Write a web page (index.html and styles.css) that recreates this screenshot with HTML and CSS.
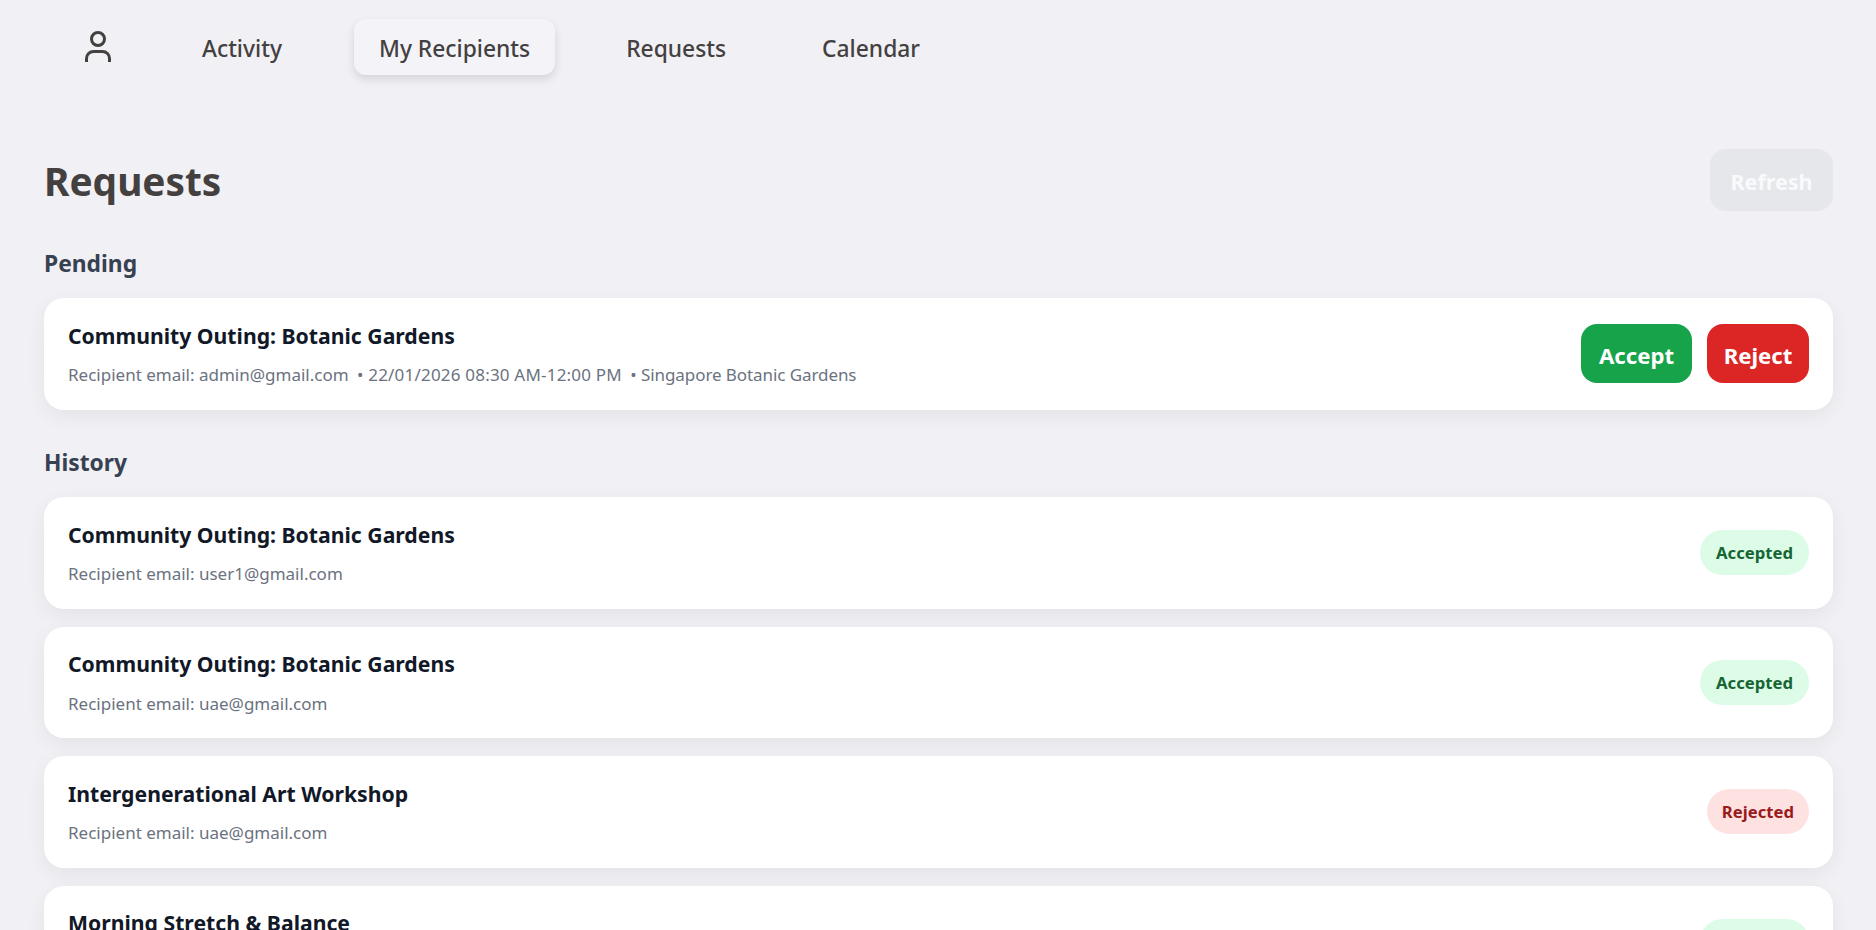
FILE: index.html
```html
<!DOCTYPE html>
<html lang="en">
<head>
<meta charset="utf-8">
<title>Requests</title>
<link rel="stylesheet" href="styles.css">
</head>
<body>
<nav class="nav">
  <a class="nav-icon" aria-label="Profile">
    <svg width="36" height="36" viewBox="0 0 36 36" fill="none" stroke="#44403f" stroke-width="3">
      <circle cx="18" cy="10" r="6.5"/>
      <path d="M6.5 33v-3.5a7 7 0 0 1 7-7h9a7 7 0 0 1 7 7V33"/>
    </svg>
  </a>
  <a class="nav-item">Activity</a>
  <a class="nav-item active">My Recipients</a>
  <a class="nav-item">Requests</a>
  <a class="nav-item">Calendar</a>
</nav>
<main class="main">
  <header class="head">
    <h1 class="title">Requests</h1>
    <button class="refresh">Refresh</button>
  </header>
  <h2 class="section">Pending</h2>
  <div class="list">
    <article class="card">
      <div class="info">
        <h3 class="name">Community Outing: Botanic Gardens</h3>
        <p class="meta">Recipient email: admin@gmail.com <span class="date">• 22/01/2026 08:30 AM-12:00 PM</span> <span class="place">• Singapore Botanic Gardens</span></p>
      </div>
      <div class="actions">
        <button class="btn accept">Accept</button>
        <button class="btn reject">Reject</button>
      </div>
    </article>
  </div>
  <h2 class="section history">History</h2>
  <div class="list">
    <article class="card">
      <div class="info">
        <h3 class="name">Community Outing: Botanic Gardens</h3>
        <p class="meta">Recipient email: user1@gmail.com</p>
      </div>
      <span class="badge ok">Accepted</span>
    </article>
    <article class="card">
      <div class="info">
        <h3 class="name">Community Outing: Botanic Gardens</h3>
        <p class="meta">Recipient email: uae@gmail.com</p>
      </div>
      <span class="badge ok">Accepted</span>
    </article>
    <article class="card">
      <div class="info">
        <h3 class="name">Intergenerational Art Workshop</h3>
        <p class="meta">Recipient email: uae@gmail.com</p>
      </div>
      <span class="badge no">Rejected</span>
    </article>
    <article class="card">
      <div class="info">
        <h3 class="name">Morning Stretch &amp; Balance</h3>
        <p class="meta">Recipient email: uae@gmail.com</p>
      </div>
      <span class="badge ok">Accepted</span>
    </article>
  </div>
</main>
</body>
</html>
```
FILE: styles.css
```css
* { box-sizing: border-box; }
html, body { height: 930px; overflow: hidden; }
body {
  margin: 0;
  background: #f0f0f5;
  font-family: "Noto Sans", "Open Sans", sans-serif;
  color: #44403f;
}
.nav {
  display: flex;
  align-items: center;
  gap: 48px;
  padding: 19px 0 0 74px;
  height: 75px;
}
.nav-icon { display: flex; width: 48px; margin-right: 8px; justify-content: center; }
.nav-item {
  display: flex;
  align-items: center;
  height: 56px;
  padding: 2px 24px 0;
  border-radius: 12px;
  font-size: 22.8px;
  font-weight: 500;
}
.nav-item.active {
  padding: 2px 25px 0;
  margin-right: -1px;
  background: #f3f3f8;
  box-shadow: 0 4px 10px rgba(0,0,0,.12);
}
.main { padding: 74px 43px 0 44px; }
.head { display: flex; justify-content: space-between; align-items: center; height: 62px; }
.title { margin: 0; padding-top: 2px; font-size: 38.8px; font-weight: 700; color: #44403f; }
.refresh {
  width: 123px;
  height: 62px;
  padding: 2px 0 0;
  border: 0;
  border-radius: 16px;
  background: #e5e7eb;
  color: #f9fafb;
  font: 700 21.5px "Noto Sans", sans-serif;
}
.section {
  margin: 38px 0 19px;
  font-size: 22.8px;
  line-height: 30px;
  font-weight: 700;
  color: #374151;
}
.section.history { margin-top: 38.4px; }
.list { display: flex; flex-direction: column; gap: 18px; }
.card {
  display: flex;
  justify-content: space-between;
  align-items: center;
  height: 111.6px;
  padding: 0 24px;
  background: #fff;
  border-radius: 20px;
  box-shadow: 0 6px 20px rgba(0,0,0,.06);
}
.name { margin: 0 0 12.5px; font-size: 21.2px; line-height: 30px; font-weight: 700; color: #111827; }
.meta { margin: 0; font-size: 17px; line-height: 24px; color: #6b7280; }
.date { margin-left: 4px; letter-spacing: .2px; }
.place { margin-left: 4px; letter-spacing: -.08px; }
.actions { display: flex; gap: 15px; }
.btn {
  height: 59px;
  padding: 3px 0 0;
  border: 0;
  border-radius: 16px;
  color: #fff;
  font: 700 22.2px "Noto Sans", sans-serif;
}
.accept { width: 111px; background: #16a34a; }
.reject { width: 102px; background: #dc2626; }
.badge {
  display: flex;
  align-items: center;
  height: 45px;
  padding: 0 16px;
  border-radius: 23px;
  font-size: 16.7px;
  font-weight: 700;
}
.ok { background: #dcfce7; color: #166534; }
.no { padding: 0 15px; background: #fee2e2; color: #991b1b; }
```
